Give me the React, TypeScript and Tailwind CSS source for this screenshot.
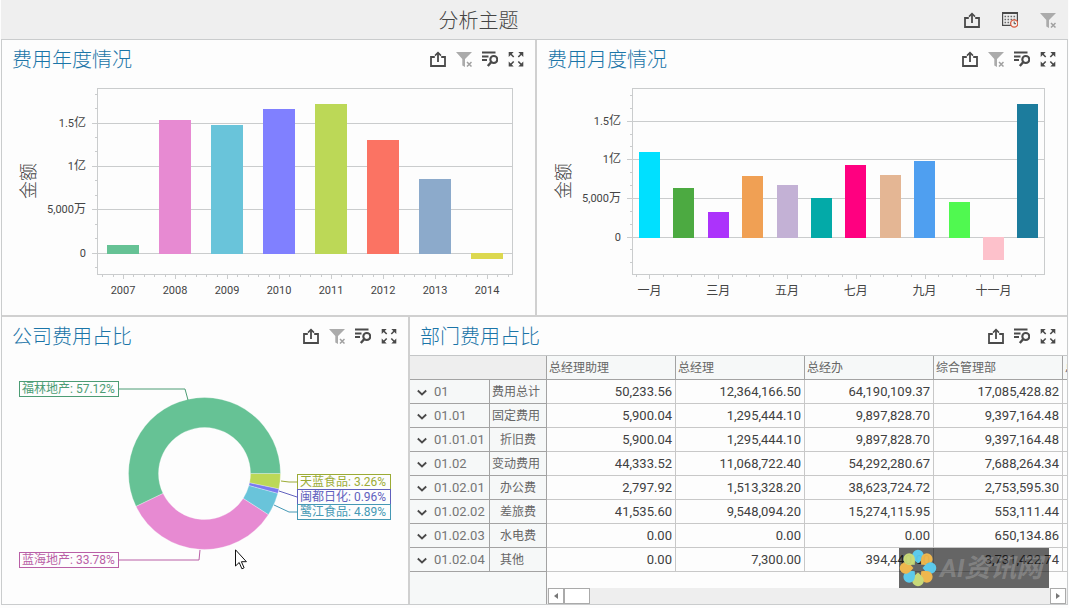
import React from 'react';

type Bar = { label: string; value: number; color: string };

const yearBars: Bar[] = [
  { label: '2007', value: 9, color: '#66c295' },
  { label: '2008', value: 134, color: '#e78ad2' },
  { label: '2009', value: 129, color: '#69c4da' },
  { label: '2010', value: 145, color: '#8080ff' },
  { label: '2011', value: 150, color: '#bcd857' },
  { label: '2012', value: 114, color: '#fb7363' },
  { label: '2013', value: 75, color: '#8caacb' },
  { label: '2014', value: -5, color: '#dcd84f' },
];

const monthBars: Bar[] = [
  { label: '一月', value: 86, color: '#00e0ff' },
  { label: '', value: 50, color: '#4caa41' },
  { label: '三月', value: 26, color: '#ac33fb' },
  { label: '', value: 62, color: '#f0a054' },
  { label: '五月', value: 53, color: '#c3b1d5' },
  { label: '', value: 40, color: '#03aaa8' },
  { label: '七月', value: 73, color: '#ff0080' },
  { label: '', value: 63, color: '#e4b694' },
  { label: '九月', value: 77, color: '#4f9ff0' },
  { label: '', value: 36, color: '#50f950' },
  { label: '十一月', value: -22, color: '#fdc1cb' },
  { label: '', value: 134, color: '#1c7c9d' },
];

const scale = [
  { number: '1.5', unit: '亿' },
  { number: '1', unit: '亿' },
  { number: '5,000', unit: '万' },
  { number: '0', unit: '' },
];

const departments = ['总经理助理', '总经理', '总经办', '综合管理部'];

const rows = [
  { code: '01', name: '费用总计', level: 0, values: ['50,233.56', '12,364,166.50', '64,190,109.37', '17,085,428.82'] },
  { code: '01.01', name: '固定费用', level: 0, values: ['5,900.04', '1,295,444.10', '9,897,828.70', '9,397,164.48'] },
  { code: '01.01.01', name: '折旧费', level: 1, values: ['5,900.04', '1,295,444.10', '9,897,828.70', '9,397,164.48'] },
  { code: '01.02', name: '变动费用', level: 0, values: ['44,333.52', '11,068,722.40', '54,292,280.67', '7,688,264.34'] },
  { code: '01.02.01', name: '办公费', level: 1, values: ['2,797.92', '1,513,328.20', '38,623,724.72', '2,753,595.30'] },
  { code: '01.02.02', name: '差旅费', level: 1, values: ['41,535.60', '9,548,094.20', '15,274,115.95', '553,111.44'] },
  { code: '01.02.03', name: '水电费', level: 1, values: ['0.00', '0.00', '0.00', '650,134.86'] },
  { code: '01.02.04', name: '其他', level: 1, values: ['0.00', '7,300.00', '394,440.00', '3,731,422.74'] },
];

// Clockwise from three o'clock
const shares = [
  { name: '天蓝食品', percent: 3.26, color: '#bcd857', ink: '#9bab35', box: [295, 119, 94], line: '279,126 287,127 295,127' },
  { name: '闽都日化', percent: 0.96, color: '#7a7af0', ink: '#6060bd', box: [295, 134, 94], line: '277,136 295,142' },
  { name: '鹭江食品', percent: 4.89, color: '#69c4da', ink: '#4598b4', box: [295, 149, 94], line: '272,150 287,157 295,157' },
  { name: '蓝海地产', percent: 33.78, color: '#e78ad2', ink: '#b95fa6', box: [17, 197, 100], line: '117,205 197,205 198,195' },
  { name: '福林地产', percent: 57.12, color: '#66c295', ink: '#4c9c74', box: [17, 26, 100], line: '117,34 183,34 186,45' },
];

function ShareIcon() {
  return (
    <svg className="h-4 w-4" viewBox="0 0 16 16" fill="none" stroke="#4a4a4a" strokeWidth="1.8">
      <path d="M4.8 6H1v9h14V6h-3.8M8 2v9" />
      <path d="M5 4.6 8 1.6l3 3" strokeWidth="1.5" />
    </svg>
  );
}

function ClearFilterIcon() {
  return (
    <svg className="h-4 w-4" viewBox="0 0 16 16">
      <path d="M0 1h16L9 8v8L6.300 14.500V8z" fill="#ababab" />
      <path d="m11 11 4.500 4.500m0-4.500L11 15.500" stroke="#a0a0a0" strokeWidth="1.500" />
    </svg>
  );
}

function DetailIcon() {
  return (
    <svg className="h-4 w-4" viewBox="0 0 16 16" fill="none" stroke="#4a4a4a" strokeWidth="1.8">
      <path d="M0 1.500h13.500M0 5.500h6.500M0 9h5" />
      <circle cx="11.800" cy="8.500" r="3.500" strokeWidth="2.100" />
      <path d="m9.300 11-3.500 4" strokeWidth="2.400" />
    </svg>
  );
}

function ExpandIcon() {
  return (
    <svg className="h-4 w-4" viewBox="0 0 16 16" fill="#4a4a4a" stroke="#4a4a4a">
      <path stroke="none" d="M.7 1h5l-5 5zM15.300 1h-5l5 5zM.7 15.500h5l-5-5zM15.300 15.500h-5l5-5z" />
      <path strokeWidth="1.600" d="m2 2.300 3.700 3.700M14 2.300l-3.700 3.700M2 14.200l3.700-3.700M14 14.200l-3.700-3.700" />
    </svg>
  );
}

function CalendarIcon() {
  return (
    <svg className="h-4 w-4" viewBox="0 0 16 16" fill="none">
      <path d="M.6 1v12.400h14.800V1" stroke="#4a4a4a" strokeWidth="1.200" />
      <path d="M0 1h16" stroke="#4a4a4a" strokeWidth="2" />
      <path d="M2.500 4.500h11M2.500 7.500h11M2.500 10.500h11" stroke="#6a6a6a" strokeWidth="1.500" strokeDasharray="1.600 1.400" />
      <circle cx="12.200" cy="11.500" r="3.600" fill="#f4f0ee" stroke="#d95f45" strokeWidth="1.300" />
      <path d="M12.200 9.500v2.200H14" stroke="#4a4a4a" />
    </svg>
  );
}

const icons = {
  导出: ShareIcon,
  清除筛选: ClearFilterIcon,
  明细: DetailIcon,
  最大化: ExpandIcon,
  日期: CalendarIcon,
};

function Tools({ names }: { names: (keyof typeof icons)[] }) {
  return (
    <>
      {names.map((name) => {
        const Icon = icons[name];
        return (
          <button key={name} type="button" aria-label={name} className="h-4 w-4 cursor-pointer">
            <Icon />
          </button>
        );
      })}
    </>
  );
}

function PanelHeader({ title, tools }: { title: string; tools: (keyof typeof icons)[] }) {
  return (
    <div className="flex h-[38px] items-center justify-between pl-[10px] pr-[11px]">
      <h2 className="pt-[2px] text-[20px] leading-6 font-light text-[#1b75a8]">{title}</h2>
      <div className="flex gap-[10px]">
        <Tools names={tools} />
      </div>
    </div>
  );
}

interface BarChartProps {
  bars: Bar[];
  width: number;
  zero: number; // y of the zero line
  step: number; // pixels between two grid lines
  first: number; // centre of the first bar
  pitch: number;
  barWidth: number;
  tick: number; // distance of major ticks on the x axis
}

function BarChart({ bars, width, zero, step, first, pitch, barWidth, tick }: BarChartProps) {
  const left = 95;
  const right = width - 23;
  const top = 10;
  const bottom = 196;
  const lineY = (i: number) => Math.floor(zero - step * (3 - i));
  const minorY: number[] = [];
  for (let y = zero - step / 3; y > top; y -= step / 3) minorY.push(Math.floor(y));
  for (let y = zero + step / 3; y < bottom; y += step / 3) minorY.push(Math.floor(y));
  const minorX: number[] = [];
  for (let x = first - tick / 5; x > left; x -= tick / 5) minorX.push(Math.round(x));
  for (let x = first + tick / 5; x < right; x += tick / 5) minorX.push(Math.round(x));

  return (
    <svg className="block w-full" viewBox={`0 0 ${width} 237`}>
      <g stroke="#cacccd" fill="none">
        <rect x={left + 0.5} y={top + 0.5} width={right - left} height={bottom - top} />
        {scale.map((s, i) => (
          <path key={i} d={`M${left - 5} ${lineY(i) + 0.5}H${right}`} />
        ))}
        {minorY.map((y) => (
          <path key={y} d={`M${left - 2} ${y + 0.5}h2`} />
        ))}
        {minorX.map((x) => (
          <path key={x} d={`M${x + 0.5} ${bottom + 1}v2`} />
        ))}
        {bars.map((bar, i) =>
          bar.label ? <path key={i} d={`M${Math.round(first + i * pitch) + 0.5} ${bottom + 1}v4`} /> : null
        )}
      </g>
      {bars.map((bar, i) => (
        <rect
          key={i}
          x={Math.round(first + i * pitch - barWidth / 2)}
          y={bar.value > 0 ? zero + 1 - bar.value : zero}
          width={barWidth}
          height={Math.abs(bar.value) + (bar.value < 0 ? 1 : 0)}
          fill={bar.color}
        />
      ))}
      <g fill="#444" fontSize="11" textAnchor="end">
        {scale.map((s, i) => (
          <text key={i} x="84" y={lineY(i) + 4}>
            {s.number}
            <tspan fontSize="12">{s.unit}</tspan>
          </text>
        ))}
      </g>
      <g fill="#444" textAnchor="middle">
        {bars.map((bar, i) => {
          const year = bar.label.startsWith('2');
          return (
            <text key={i} x={first + i * pitch} y={year ? 216 : 217} fontSize={year ? 11 : 12}>
              {bar.label}
            </text>
          );
        })}
      </g>
      <text transform="translate(33 103) rotate(-90)" textAnchor="middle" fontSize="18" fontWeight="300" fill="#444">
        金额
      </text>
    </svg>
  );
}

function slicePath(from: number, to: number) {
  const cx = 202.5;
  const cy = 118.5;
  const point = (r: number, t: number) =>
    `${cx + r * Math.cos(t * 2 * Math.PI)} ${cy + r * Math.sin(t * 2 * Math.PI)}`;
  const large = to - from > 0.5 ? 1 : 0;
  return `M${point(76, from)}A76 76 0 ${large} 1 ${point(76, to)}L${point(46, to)}A46 46 0 ${large} 0 ${point(46, from)}Z`;
}

function DonutChart() {
  let total = 0;
  return (
    <svg className="block w-full" viewBox="0 0 406 249">
      {shares.map((s) => {
        const from = total / 100;
        total += s.percent;
        return <path key={s.name} d={slicePath(from, total / 100)} fill={s.color} stroke="#fdfdfd" strokeWidth="0.300" />;
      })}
      {shares.map((s) => (
        <g key={s.name}>
          <polyline points={s.line} fill="none" stroke={s.ink} />
          <rect x={s.box[0] + 0.5} y={s.box[1] + 0.5} width={s.box[2] - 1} height="15" fill="#fdfdfd" stroke={s.ink} />
          <text x={s.box[0] + 3} y={s.box[1] + 12} fontSize="12" fill={s.ink}>
            {s.name}: {s.percent}%
          </text>
        </g>
      ))}
    </svg>
  );
}

function DepartmentTable() {
  return (
    <div className="overflow-hidden border-t border-[#c4c6c7]">
      <table className="w-[790px] table-fixed border-separate border-spacing-0">
        <colgroup>
          <col className="w-[80px]" />
          <col className="w-[57px]" />
          <col className="w-[129px]" />
          <col className="w-[129px]" />
          <col className="w-[129px]" />
          <col className="w-[129px]" />
          <col />
        </colgroup>
        <thead>
          <tr className="h-6">
            <td colSpan={2} className="border-r border-b border-[#a3a3a3] bg-[#eee]"></td>
            {[...departments, '总'].map((name) => (
              <th
                key={name}
                scope="col"
                className="border-r border-b border-[#a3a3a3] bg-[#f6f8f8] pl-[2px] text-left text-[12px] leading-4 font-normal text-[#666]"
              >
                {name}
              </th>
            ))}
          </tr>
        </thead>
        <tbody>
          {rows.map((row) => (
            <tr key={row.code} className="h-6">
              <th scope="row" className="border-r border-b border-[#a3a3a3] bg-[#f6f8f8] p-0 font-normal">
                <div className="flex items-center gap-[7px] pl-[7px] text-[13px] leading-4 text-[#757575]">
                  <button type="button" aria-label={`展开 ${row.code}`} className="cursor-pointer">
                    <svg className="h-[10px] w-[10px]" viewBox="0 0 10 10" fill="none" stroke="#4a4a4a" strokeWidth="1.800">
                      <path d="m.8 3.500 4.200 4 4.200-4" />
                    </svg>
                  </button>
                  {row.code}
                </div>
              </th>
              <td
                className={`border-r border-b border-[#a3a3a3] bg-[#f6f8f8] text-[12px] leading-4 text-[#666] ${
                  row.level ? 'pl-[10px]' : 'pl-[2px]'
                }`}
              >
                {row.name}
              </td>
              {row.values.map((value, i) => (
                <td key={i} className="border-r border-b border-[#c8c8c8] pr-[3px] text-right text-[13px] leading-4 text-[#404040]">
                  {value}
                </td>
              ))}
              <td className="border-b border-[#c8c8c8]"></td>
            </tr>
          ))}
        </tbody>
      </table>
      <div className="flex h-8">
        <div className="w-[137px] border-r border-[#a3a3a3] bg-[#f6f8f8]"></div>
        <div className="flex h-4 flex-1 self-end bg-[#eee] px-px">
          <button type="button" aria-label="向左滚动" className="flex w-4 items-center justify-center border border-[#aaa] bg-white">
            <svg className="h-[6px] w-[4px]" viewBox="0 0 4 6">
              <path d="M4 0v6L0 3z" fill="#777" />
            </svg>
          </button>
          <div className="w-[26px] border border-[#aaa] bg-white"></div>
          <button type="button" aria-label="向右滚动" className="ml-auto flex w-4 items-center justify-center border border-[#aaa] bg-white">
            <svg className="h-[6px] w-[4px]" viewBox="0 0 4 6">
              <path d="M0 0v6l4-3z" fill="#777" />
            </svg>
          </button>
        </div>
      </div>
    </div>
  );
}

function Watermark() {
  const petals = ['#5cd5fb', '#fdc04d', '#5cd5fb', '#fdc04d', '#d3e67c', '#5cd5fb', '#fdc04d', '#d3e67c'];
  return (
    <div className="absolute right-[18px] bottom-4 flex h-10 w-[150px] items-center overflow-hidden bg-black/60">
      <svg className="h-[38px] w-[38px] shrink-0" viewBox="0 0 38 38" opacity="0.900">
        {petals.map((color, i) => (
          <path
            key={i}
            d="M19 14.500c-2-2-5.800-4.500-5.800-8a5.800 5.800 0 0 1 11.600 0c0 3.500-3.800 6-5.800 8z"
            fill={color}
            transform={`rotate(${i * 45} 19 19)`}
          />
        ))}
      </svg>
      <span className="pl-[3px] text-[26px] leading-10 font-bold whitespace-nowrap text-white/20 italic">AI资讯网</span>
    </div>
  );
}

function App() {
  return (
    <div className="min-h-screen bg-[#fdfdfd] px-px font-['Roboto','Noto_Sans_CJK_SC',sans-serif] text-[#444]">
      <header className="flex h-10 items-center border-b border-[#cacccd] bg-[#efefef] pr-3">
        <h1 className="flex-1 pt-[2px] text-center text-[20px] leading-6 font-light text-[#444]">分析主题</h1>
        <div className="flex gap-[22px] pl-2">
          <Tools names={['导出', '日期', '清除筛选']} />
        </div>
      </header>

      <main className="border-x border-b border-[#cacccd]">
        <div className="grid grid-cols-[535fr_530fr] border-b-2 border-[#d0d0d0]">
          <section className="border-r-2 border-[#d0d0d0]">
            <PanelHeader title="费用年度情况" tools={['导出', '清除筛选', '明细', '最大化']} />
            <BarChart bars={yearBars} width={533} zero={175} step={43.33} first={121} pitch={52} barWidth={32} tick={52} />
          </section>
          <section>
            <PanelHeader title="费用月度情况" tools={['导出', '清除筛选', '明细', '最大化']} />
            <BarChart bars={monthBars} width={530} zero={159} step={38.6} first={112.4} pitch={34.4} barWidth={21} tick={68.8} />
          </section>
        </div>

        <div className="grid grid-cols-[408fr_657fr]">
          <section className="relative border-r-2 border-[#d0d0d0]">
            <PanelHeader title="公司费用占比" tools={['导出', '清除筛选', '明细', '最大化']} />
            <DonutChart />
            <svg className="absolute top-[232px] left-[233px] h-[21px] w-[12px]" viewBox="0 0 12 21">
              <path d="M.5.8v16.200l3.700-3.500 2.700 6.300 2.200-1-2.700-6.100h5z" fill="#fff" stroke="#111" />
            </svg>
          </section>
          <section className="relative min-w-0">
            <PanelHeader title="部门费用占比" tools={['导出', '明细', '最大化']} />
            <DepartmentTable />
            <Watermark />
          </section>
        </div>
      </main>
    </div>
  );
}

export default App;
